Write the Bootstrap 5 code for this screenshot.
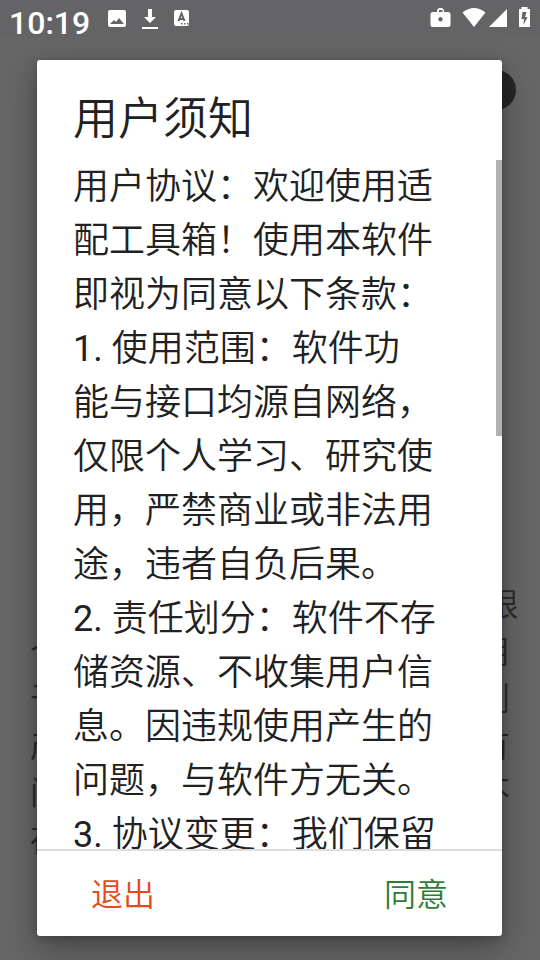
<!DOCTYPE html>
<html lang="zh-CN">
<head>
<meta charset="utf-8">
<meta name="viewport" content="width=device-width, initial-scale=1">
<title>用户须知</title>
<link rel="stylesheet" href="https://cdn.jsdelivr.net/npm/bootstrap@5.3.0/dist/css/bootstrap.min.css">
<style>
  body { font-family: Roboto, "Noto Sans CJK SC", sans-serif; background: #666; color: #212121; }
  .status-bar { height: 38px; padding: 0 8px 0 9px; background: #646466; color: #fff; }
  .clock { font-size: 32px; line-height: 46px; font-weight: 500; height: 38px; }
  .status-bar svg { fill: #fff; display: block; }
  .status-icons { gap: 13px; }
  .avatar-dot { width: 40px; height: 40px; background: #262626; margin: 32px 24px 0 auto; }
  .page-text { margin: auto 0 96px; padding-left: 30px; font-size: 32px; line-height: 47px; font-weight: 350; color: #2b2b2b; }
  .dialog-layer { padding: 60px 38px 24px 37px; }
  .notice { border-radius: 3px; box-shadow: 0 12px 34px rgba(0,0,0,.32), 0 2px 8px rgba(0,0,0,.2); }
  .notice-title { font-size: 45px; line-height: 60px; padding: 30px 36px 10px; font-weight: 350; }
  .notice-scroll { min-height: 0; }
  .notice-text { font-size: 36px; line-height: 54px; padding-left: 36px; font-weight: 350; }
  .thumb { width: 6px; height: 40%; background: #b0b0b0; }
  .notice-actions { border-top: 2px solid #ddd; height: 87px; padding: 2px 54px 0; }
  .notice-actions .btn { font-size: 32px; line-height: 48px; padding: 0; border: 0; font-weight: 350; }
  .btn-exit { color: #e64a19; }
  .btn-agree { color: #2e7d32; }
</style>
<script src="https://cdn.jsdelivr.net/npm/bootstrap@5.3.0/dist/js/bootstrap.bundle.min.js"></script>
</head>
<body>
<div class="vh-100 position-relative overflow-hidden d-flex flex-column">
  <header class="status-bar d-flex justify-content-between flex-shrink-0">
    <div class="d-flex">
      <div class="clock">10:19</div>
      <div class="status-icons d-flex align-items-start ms-3 pt-2">
        <svg width="22" height="22" viewBox="0 0 22 22"><path fill-rule="evenodd" d="M4 2h14a2 2 0 0 1 2 2v13a2 2 0 0 1-2 2H4a2 2 0 0 1-2-2V4a2 2 0 0 1 2-2zM4 16h14l-5-6-3 4-2-2z"/></svg>
        <svg width="18" height="22" viewBox="0 0 18 22"><path d="M7 1h4v8h4l-6 6-6-6h4zM1 19h16v2H1z"/></svg>
        <svg width="18" height="22" viewBox="0 0 18 22"><path d="M4 2h11a2 2 0 0 1 2 2v12a2 2 0 0 1-2 2H4a2 2 0 0 1-2-2V4a2 2 0 0 1 2-2z"/><path d="M6.500 13 9.500 5.500l3 7.500M7.500 11h4" fill="none" stroke="#646466" stroke-width="2"/><path d="M9 15h1.500v1.500H9zm3 0h1.500v1.500H12zm3 0h1.500v1.500H15z" fill="#646466"/></svg>
      </div>
    </div>
    <div class="d-flex pt-1">
      <svg width="102" height="28" viewBox="430 4 102 28">
        <path fill-rule="evenodd" d="M433 12h4v-2l2-2h3l2 2v2h4q2.500 0 2.500 2.500v10q0 2.500-2.500 2.500h-15q-2.500 0-2.500-2.500v-10q0-2.500 2.500-2.500zM439 12h3.500v-2H439zM440.500 17a2.200 2.200 0 1 0 0 4.400 2.200 2.200 0 0 0 0-4.400z"/>
        <path d="M462.500 12.500q11.500-9 23 0L474 27zM489 27h18V9zM521.500 9v-2h6v2h2.500v18h-11V9z"/>
        <path d="M522.500 12h4l-1.500 5h2.500l-4 8 .5-6h-2.500z" fill="#646466"/>
      </svg>
    </div>
  </header>
  <div class="avatar-dot rounded-circle flex-shrink-0"></div>
  <p class="page-text text-nowrap">&emsp;&nbsp;软件功能与接口源自网络，仅限<br>个人学习、研究使用，请勿商业用<br>于非法用途，违者后果自负责任划<br>产生问题与本软件方无关，均享有<br>问题资源、不收集用户信息一概不<br>存储资源。</p>

  <div class="dialog-layer position-absolute top-0 start-0 w-100 h-100">
    <section class="notice bg-white h-100 d-flex flex-column" role="dialog" aria-labelledby="noticeTitle">
      <h1 class="notice-title m-0" id="noticeTitle">用户须知</h1>
      <div class="notice-scroll flex-grow-1 d-flex justify-content-between overflow-hidden">
        <p class="notice-text m-0 text-nowrap">用户协议：欢迎使用适<br>配工具箱！使用本软件<br>即视为同意以下条款：<br><span class="fw-normal">1. </span>使用范围：软件功<br>能与接口均源自网络，<br>仅限个人学习、研究使<br>用，严禁商业或非法用<br>途，违者自负后果。<br><span class="fw-normal">2. </span>责任划分：软件不存<br>储资源、不收集用户信<br>息。因违规使用产生的<br>问题，与软件方无关。<br><span class="fw-normal">3. </span>协议变更：我们保留</p>
        <div class="thumb flex-shrink-0"></div>
      </div>
      <div class="notice-actions d-flex justify-content-between align-items-center flex-shrink-0">
        <button type="button" class="btn btn-exit">退出</button>
        <button type="button" class="btn btn-agree">同意</button>
      </div>
    </section>
  </div>
</div>
</body>
</html>
